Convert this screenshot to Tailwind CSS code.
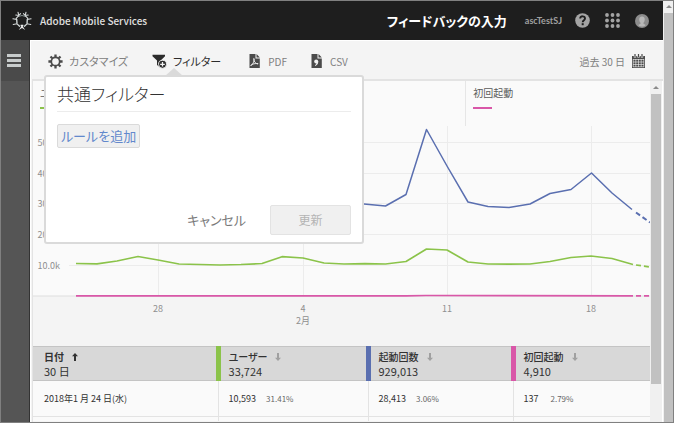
<!DOCTYPE html>
<html lang="ja">
<head>
<meta charset="utf-8">
<meta name="viewport" content="width=device-width, initial-scale=1">
<title>Adobe Mobile Services</title>
<script src="https://cdn.jsdelivr.net/npm/@tailwindcss/browser@4"></script>
</head>
<body class="flex h-screen overflow-hidden border border-[#808080] bg-[#f4f4f4] font-['Noto_Sans_CJK_JP',sans-serif] text-[11px] text-[#4b4b4b] [font-feature-settings:'palt']">
  <div class="flex min-w-0 flex-1 flex-col">
    <header class="flex h-[39px] shrink-0 items-center justify-between bg-[#1e1e1e] pr-[14px] pl-[11px]">
      <a href="#" class="flex items-center gap-2 text-[10px] font-medium text-[#e0e0e0]">
        <svg class="size-5" viewBox="0 0 20 20" fill="none" stroke-linecap="round" aria-hidden="true">
          <g stroke="#8f9c9c" stroke-width=".9">
            <path d="M6.500 5.500L10 4.500l3.500 1M5 8.500v3.500M15 8.500V12M6.500 14l2 .8M13.500 14l-2 .8"/>
          </g>
          <g stroke="#d6dada" stroke-width="1.100">
            <path d="M6 1.200l.8 3.300-2.600 2.800M8.600 2.700l-1.800 1.800-3-.5M14 1.200l-.8 3.300 2.600 2.800M11.400 2.700l1.800 1.800 3-.5M.900 7.800l3.700.7.400 4.500M1.200 13.500l3.800-.7 2.500 2.500M19.100 7.800l-3.700.7-.4 4.500M18.800 13.500l-3.800-.7-2.500 2.500"/>
          </g>
          <path d="M6.800 19l2.400-3.500-.6-1.700h2.800l-.6 1.700 2.400 3.500-3.200-1.900z" fill="#ececec"/>
        </svg>
        Adobe Mobile Services
      </a>
      <div class="flex items-center">
        <a href="#" class="text-[13px] font-bold text-white">フィードバックの入力</a>
        <span class="ml-[18px] font-['Lato','Noto_Sans_CJK_JP',sans-serif] text-[9px] font-bold text-[#a0a0a0]">ascTestSJ</span>
        <button type="button" aria-label="ヘルプ" class="ml-[13px]">
          <svg class="size-[15px]" viewBox="0 0 15 15" aria-hidden="true"><circle cx="7.500" cy="7.500" r="7.300" fill="#a4a4a4"/><path d="M5.200 5.500c0-3 4.800-2.800 4.800 0 0 1.700-2.300 1.700-2.300 3.700" fill="none" stroke="#1e1e1e" stroke-width="1.900"/><rect x="6.700" y="10.200" width="2" height="2" fill="#1e1e1e"/></svg>
        </button>
        <button type="button" aria-label="アプリ" class="ml-[15px]">
          <svg class="size-[15px]" viewBox="0 0 15 15" fill="#a4a4a4" aria-hidden="true"><circle cx="2" cy="2" r="1.900"/><circle cx="7.500" cy="2" r="1.900"/><circle cx="13" cy="2" r="1.900"/><circle cx="2" cy="7.500" r="1.900"/><circle cx="7.500" cy="7.500" r="1.900"/><circle cx="13" cy="7.500" r="1.900"/><circle cx="2" cy="13" r="1.900"/><circle cx="7.500" cy="13" r="1.900"/><circle cx="13" cy="13" r="1.900"/></svg>
        </button>
        <button type="button" aria-label="アカウント" class="ml-[15px]">
          <svg class="size-[14px]" viewBox="0 0 14 14" aria-hidden="true"><circle cx="7" cy="7" r="7" fill="#8c8c8c"/><path d="M7 2.500c-3.600 0-3.200 4.700-1.500 6.300v1L3.300 11c2 2 5.400 2 7.400 0L8.500 9.800v-1C10.200 7.200 10.600 2.500 7 2.500z" fill="#b8b8b8"/></svg>
        </button>
      </div>
    </header>
    <div class="flex min-h-0 flex-1">
      <nav class="w-[29px] shrink-0 border-r border-[#333] bg-[#555]">
        <button type="button" aria-label="メニュー" class="flex h-[41px] w-full flex-col items-center justify-center gap-[2px] bg-[#4a4a4a] pr-[3px]">
          <span class="h-[3px] w-[14px] bg-[#c8cccc]"></span><span class="h-[3px] w-[14px] bg-[#c8cccc]"></span><span class="h-[3px] w-[14px] bg-[#c8cccc]"></span>
        </button>
      </nav>
      <main class="flex min-w-0 flex-1 flex-col border-t border-l border-white pl-px">
        <div class="relative flex h-10 shrink-0 items-center justify-between border-b-2 border-[#e3e3e3] pt-[2px] pr-[18px] pl-4">
          <div class="flex items-center text-[11px] text-[#808080]">
            <button type="button" class="flex items-center gap-[6px]">
              <svg class="size-[15px]" viewBox="0 0 15 15" fill="none" stroke="#4b4b4b" aria-hidden="true"><circle cx="7.500" cy="7.500" r="4.200" stroke-width="1.700"/><path d="M7.500.4v2.600M7.500 12v2.600M.4 7.500H3M12 7.500h2.600M2.500 2.500l1.800 1.800M10.700 10.700l1.800 1.800M12.500 2.500l-1.800 1.800M4.300 10.700l-1.800 1.800" stroke-width="2.300"/></svg>
              カスタマイズ
            </button>
            <button type="button" aria-expanded="true" class="ml-6 flex items-center gap-[6px] text-[#2c2c2c]">
              <svg class="size-[15px]" viewBox="0 0 15 15" aria-hidden="true"><path d="M.500.800h12.500v1.500L8.700 6.500v7.300L5 11V6.500L.500 2.300z" fill="#2c2c2c"/><circle cx="10.500" cy="10.300" r="4" fill="#2c2c2c" stroke="#f4f4f4" stroke-width=".9"/><path d="M10.500 8v4.600M8.200 10.300h4.600" stroke="#f4f4f4" stroke-width="1.300"/></svg>
              フィルター
            </button>
            <button type="button" class="ml-7 flex items-center gap-2">
              <svg class="h-[14px] w-[11px]" viewBox="0 0 11 14" aria-hidden="true"><path d="M.500 0h6v4.500H10.800V14H.500zM7.500 0l3.300 3.500H7.500z" fill="#4b4b4b"/><path d="M4.800 4.500c1.500 0-.2 5-2.800 7.300-1.200-.7 2.500-2.500 7-2.300.8.900-2.300.7-3.900-2.500-.6-1.200-.7-2.500-.3-2.500z" fill="none" stroke="#f4f4f4" stroke-width=".9"/></svg>
              <span class="text-[10px]">PDF</span>
            </button>
            <button type="button" class="ml-6 flex items-center gap-2">
              <svg class="h-[14px] w-[11px]" viewBox="0 0 11 14" aria-hidden="true"><path d="M.500 0h6v4.500H10.800V14H.500zM7.500 0l3.300 3.500H7.500z" fill="#4b4b4b"/><circle cx="5.200" cy="7.500" r="2" fill="#f4f4f4"/><path d="M7.200 7.500c.2 2.400-1 3.800-3.200 4.400v-1c1-.4 1.500-1 1.400-2z" fill="#f4f4f4"/></svg>
              <span class="text-[10px]">CSV</span>
            </button>
          </div>
          <button type="button" class="flex items-center gap-[7px] text-[10px] text-[#808080]">
            過去 30 日
            <svg class="h-[14px] w-[13px]" viewBox="0 0 13 14" aria-hidden="true"><path d="M0 2h13v12H0z" fill="#4b4b4b"/><path d="M3 0v3.500M6.500 0v3.500M10 0v3.500" stroke="#f4f4f4" stroke-width="2.400"/><path d="M3 0v3M6.500 0v3M10 0v3" stroke="#4b4b4b" stroke-width="1.200"/><path d="M1 5.500h11M1 8h11M1 10.500h11M1 12.800h11M1.200 5v8M3.800 5v8M6.500 5v8M9.200 5v8M11.800 5v8" stroke="#f4f4f4" stroke-width=".6"/></svg>
          </button>
          <section aria-labelledby="filter-title" class="absolute top-[34px] left-[12px] z-10 w-[320px] rounded-[3px] border-2 border-[#dadada] bg-white px-[11px] pb-[7px]">
            <svg class="absolute -top-[9px] left-[119px] h-2 w-[18px]" viewBox="0 0 18 8" aria-hidden="true"><path d="M0 8L9 0l9 8z" fill="#dadada"/></svg>
            <h2 id="filter-title" class="h-[35px] border-b border-[#ececec] pt-[5px] text-[17px] leading-6 font-light text-[#323232]">共通フィルター</h2>
            <button type="button" class="mt-3 flex h-6 items-center rounded-[2px] border border-[#dadada] bg-[#f0f0f0] px-[3px] text-[13px] text-[#6288cc]">ルールを追加</button>
            <div class="mt-[57px] flex items-center justify-end gap-6 text-[13px]">
              <button type="button" class="text-[#7a7a7a]">キャンセル</button>
              <button type="button" disabled class="h-[30px] w-[81px] rounded-[2px] border border-[#e3e3e3] bg-[#f0f0f0] text-xs text-[#b4b4b4]">更新</button>
            </div>
          </section>
        </div>
        <div class="flex min-h-0 flex-1">
          <div class="min-w-0 flex-1 overflow-hidden border-l border-[#e3e3e3]">
            <div class="grid h-[45px] grid-cols-[216fr_217fr_185fr] bg-[#fafafa] text-[10px] leading-4 text-[#5a5a5a]">
              <div class="px-[7px] pt-1">ユーザー<span class="mt-[6px] block h-[2px] w-[19px] bg-[#8bc34a]"></span></div>
              <div class="border-l border-[#e6e6e6] px-[7px] pt-1">起動回数<span class="mt-[6px] block h-[2px] w-[19px] bg-[#5a6fb0]"></span></div>
              <div class="border-l border-[#e6e6e6] px-[7px] pt-1">初回起動<span class="mt-[6px] block h-[2px] w-[19px] bg-[#d957a8]"></span></div>
            </div>
            <svg class="block w-full" viewBox="33 126 617 220" fill="none" role="img" aria-label="過去 30 日の推移">
              <path d="M33 126h617v170H33z" fill="#fafafa"/>
              <path d="M69 142.500h581M69 173.500h581M69 203.500h581M69 234.500h581M69 265.500h581M158.500 126v170M303.500 126v170M447.500 126v170M591.500 126v170" stroke="#ececec"/>
              <path d="M33 296h617" stroke="#dedede"/>
              <g stroke-width="1.500" stroke-linejoin="round">
                <g stroke="#5a6fb0">
                  <path d="M76 205l21 0 20-5 21-8 21 5 20 8 21 1 21 1 20-1 21-4 20-14 21 4 21 10 20 1.500 20 .5 21.500 2L406 194.500 426.500 129.500 447 166 468 202 488 206.500 509 207.500 530 204 550 193.500 571 189.500 591.500 173 612 193 632 209.500"/>
                  <path d="M636 212.500l14 10" stroke-width="2" stroke-dasharray="5 3"/>
                </g>
                <g stroke="#8bc34a" stroke-width="1.700">
                  <path d="M76 263.500L97 263.800 117 261 138 256.500 158 260 179 264 200 264.500 220 265 241 264.500 262 263.500 282 256.700 303 258 324 263 344 264 365 263.700 385.500 264 406 261.500 426.500 249 447 250 468 262 488 264 509 264.200 530 264 550 261.500 571 257.500 591 256 612 258.500 633 264.500"/>
                  <path d="M636 265l14 2" stroke-dasharray="5 3"/>
                </g>
                <g stroke="#d957a8" stroke-width="1.700">
                  <path d="M76 295.800L406 295.800 426 295.500 633 295.800"/>
                  <path d="M636 295.800h14" stroke-dasharray="5 3"/>
                </g>
              </g>
              <g fill="#8f8f8f" font-size="9" text-anchor="end">
                <text x="60" y="146">50.0k</text><text x="60" y="177">40.0k</text><text x="60" y="207">30.0k</text><text x="60" y="238">20.0k</text><text x="60" y="269">10.0k</text>
              </g>
              <g fill="#8f8f8f" font-size="9" text-anchor="middle">
                <text x="158" y="312">28</text><text x="303" y="312">4</text><text x="303" y="324">2月</text><text x="447" y="312">11</text><text x="591" y="312">18</text>
              </g>
            </svg>
            <table class="w-full table-fixed border-collapse text-left leading-[14px]">
              <colgroup><col class="w-[30%]"><col class="w-[24.3%]"><col class="w-[23.5%]"><col></colgroup>
              <thead>
                <tr class="h-[34px] border-y border-[#c4c4c4] bg-[#d8d8d8] text-[10px] text-[#323232]">
                  <th scope="col" aria-sort="ascending" class="pl-[11px] font-normal"><span class="flex items-center gap-2 font-bold">日付 <svg class="h-2 w-[6px]" viewBox="0 0 6 8" aria-hidden="true"><path d="M3 0l3 3.300H4V8H2V3.300H0z" fill="#323232"/></svg></span><span class="block text-[11px]">30 日</span></th>
                  <th scope="col" class="border-l-[5px] border-l-[#8bc34a] pl-2 font-normal"><span class="flex items-center gap-2 font-medium">ユーザー <svg class="h-2 w-[6px]" viewBox="0 0 6 8" aria-hidden="true"><path d="M3 8L0 4.700h2V0h2v4.700h2z" fill="#a0a0a0"/></svg></span><span class="block text-[11px]">33,724</span></th>
                  <th scope="col" class="border-l-[5px] border-l-[#5a6fb0] pl-2 font-normal"><span class="flex items-center gap-2 font-medium">起動回数 <svg class="h-2 w-[6px]" viewBox="0 0 6 8" aria-hidden="true"><path d="M3 8L0 4.700h2V0h2v4.700h2z" fill="#a0a0a0"/></svg></span><span class="block text-[11px]">929,013</span></th>
                  <th scope="col" class="border-l-[5px] border-l-[#d957a8] pl-2 font-normal"><span class="flex items-center gap-2 font-medium">初回起動 <svg class="h-2 w-[6px]" viewBox="0 0 6 8" aria-hidden="true"><path d="M3 8L0 4.700h2V0h2v4.700h2z" fill="#a0a0a0"/></svg></span><span class="block text-[11px]">4,910</span></th>
                </tr>
              </thead>
              <tbody class="bg-[#fafafa] text-[9px] text-[#323232]">
                <tr class="h-9 border-b border-[#e3e3e3]">
                  <td class="pl-[11px]">2018年1 月 24 日(水)</td>
                  <td class="border-l border-[#e3e3e3] pl-[10px]">10,593 <span class="ml-2 text-[8px] text-[#666]">31.41%</span></td>
                  <td class="border-l border-[#e3e3e3] pl-[10px]">28,413 <span class="ml-2 text-[8px] text-[#666]">3.06%</span></td>
                  <td class="border-l border-[#e3e3e3] pl-[10px]">137 <span class="ml-[10px] text-[8px] text-[#666]">2.79%</span></td>
                </tr>
                <tr class="h-1"><td></td><td class="border-l border-[#e3e3e3]"></td><td class="border-l border-[#e3e3e3]"></td><td class="border-l border-[#e3e3e3]"></td></tr>
              </tbody>
            </table>
          </div>
          <div class="flex w-3 shrink-0 flex-col items-center bg-[#f0f0f0]" aria-hidden="true">
            <svg class="h-[13px] w-[6px] shrink-0" viewBox="0 0 6 13"><path d="M0 8l3-3 3 3z" fill="#8a8a8a"/></svg>
            <div class="h-[85%] w-[10px] bg-[#c1c1c1]"></div>
          </div>
          <div class="w-px bg-white"></div>
        </div>
      </main>
    </div>
  </div>
  <div class="flex w-[10px] shrink-0 flex-col items-center bg-[#f0f0f0] pl-px" aria-hidden="true">
    <svg class="h-3 w-[6px] shrink-0" viewBox="0 0 6 12"><path d="M0 7l3-3 3 3z" fill="#8a8a8a"/></svg>
    <div class="w-full flex-1 bg-[#c1c1c1]"></div>
  </div>
</body>
</html>
